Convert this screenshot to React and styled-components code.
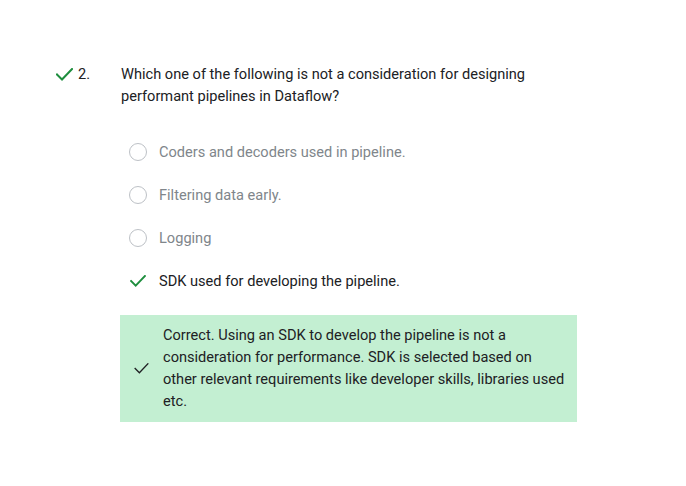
import React from "react";
import styled, { createGlobalStyle } from "styled-components";

const Global = createGlobalStyle`
  html, body { margin: 0; padding: 0; background: #fff; }
  body { font-family: Roboto, "Noto Sans", Arial, sans-serif; color: #202124; }
`;

const Page = styled.div`
  width: 686px;
  height: 486px;
  box-sizing: border-box;
  padding: 63px 0 0 55px;
`;

const QuestionRow = styled.div`
  display: flex;
  align-items: flex-start;
`;

const StatusIcon = styled.div`
  width: 18px;
  height: 22px;
  display: flex;
  align-items: center;
  justify-content: center;
  flex-shrink: 0;
`;

const Number = styled.div`
  width: 48px;
  padding-left: 5px;
  box-sizing: border-box;
  font-size: 14.6px;
  line-height: 22px;
`;

const Body = styled.div`
  display: flex;
  flex-direction: column;
`;

const QuestionText = styled.div`
  font-size: 14.6px;
  line-height: 22px;
  width: 430px;
`;

const Options = styled.div`
  display: flex;
  flex-direction: column;
  gap: 21px;
  margin: 34px 0 0 8px;
`;

const Option = styled.div`
  display: flex;
  align-items: center;
  gap: 12px;
  height: 22px;
  font-size: 14.6px;
  color: ${(p) => (p.$selected ? "#202124" : "#80868b")};
`;

const Radio = styled.span`
  width: 18px;
  height: 18px;
  box-sizing: border-box;
  border: 1.5px solid #bdc1c6;
  border-radius: 50%;
  flex-shrink: 0;
`;

const IconSlot = styled.span`
  width: 18px;
  height: 18px;
  display: flex;
  align-items: center;
  justify-content: center;
  flex-shrink: 0;
`;

const Feedback = styled.div`
  display: flex;
  align-items: center;
  width: 457px;
  box-sizing: border-box;
  margin-top: 23px;
  margin-left: -1px;
  padding: 9px 12px 10px 12px;
  background: #c3efd2;
`;

const FeedbackIcon = styled.span`
  width: 18px;
  display: flex;
  justify-content: center;
  margin-right: 13px;
  flex-shrink: 0;
`;

const FeedbackText = styled.div`
  font-size: 14.6px;
  line-height: 22px;
  color: #202124;
`;

const Check = ({ color = "#1e8e3e", w = 17, h = 13, sw = 2 }) => (
  <svg width={w} height={h} viewBox="0 0 17 13" fill="none">
    <path d="M1 6.5 L6 11.5 L16 1" stroke={color} strokeWidth={sw} strokeLinecap="square" />
  </svg>
);

const options = [
  { text: "Coders and decoders used in pipeline." },
  { text: "Filtering data early." },
  { text: "Logging" },
  { text: "SDK used for developing the pipeline.", selected: true },
];

export default function App() {
  return (
    <>
      <Global />
      <Page>
        <QuestionRow>
          <StatusIcon>
            <Check />
          </StatusIcon>
          <Number>2.</Number>
          <Body>
            <QuestionText>
              Which one of the following is not a consideration for designing performant pipelines in Dataflow?
            </QuestionText>
            <Options>
              {options.map((o) => (
                <Option key={o.text} $selected={o.selected}>
                  {o.selected ? (
                    <IconSlot>
                      <Check w={16} h={12} />
                    </IconSlot>
                  ) : (
                    <Radio />
                  )}
                  {o.text}
                </Option>
              ))}
            </Options>
            <Feedback>
              <FeedbackIcon>
                <Check color="#202124" w={15} h={11} sw={1.6} />
              </FeedbackIcon>
              <FeedbackText>
                Correct. Using an SDK to develop the pipeline is not a consideration for performance. SDK is selected based on other relevant requirements like developer skills, libraries used etc.
              </FeedbackText>
            </Feedback>
          </Body>
        </QuestionRow>
      </Page>
    </>
  );
}
